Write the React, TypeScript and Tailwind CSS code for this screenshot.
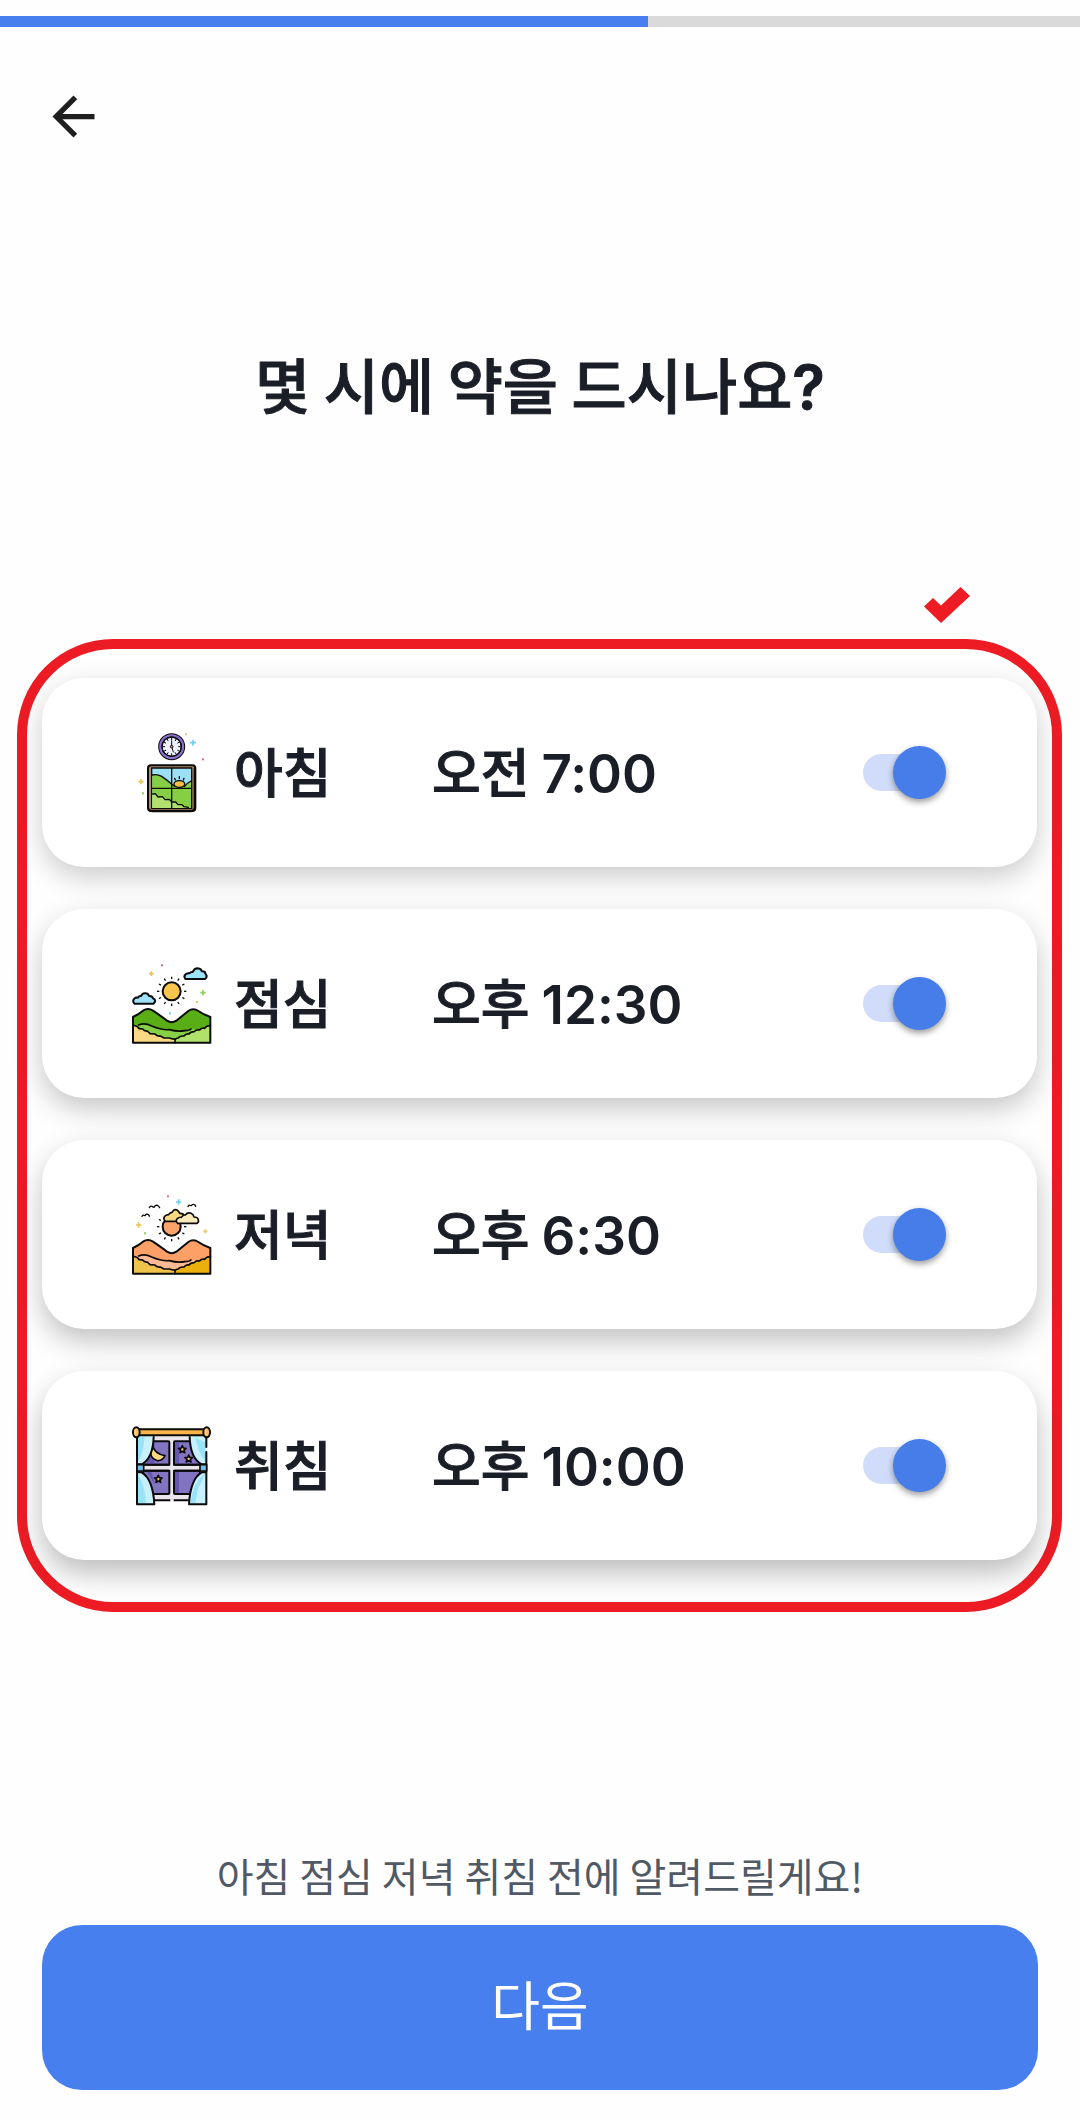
import { useState } from "react";
import type { ReactNode } from "react";

type Slot = { id: string; label: string; period: string; clock: string; icon: ReactNode; shadow: string };

const ink = { stroke: "#0b0b0b", strokeWidth: 6, strokeLinejoin: "round", strokeLinecap: "round" } as const;
const thin = { stroke: "#0b0b0b", strokeWidth: 4, strokeLinejoin: "round", strokeLinecap: "round", fill: "none" } as const;

function Sparkle({ x, y, r, color }: { x: number; y: number; r: number; color: string }) {
  return <path d={`M${x - r} ${y}h${2 * r}M${x} ${y - r}v${2 * r}`} stroke={color} strokeWidth={5} fill="none" />;
}

function Dot({ x, y, color }: { x: number; y: number; color: string }) {
  return <rect x={x - 3} y={y - 3} width={6} height={6} fill={color} />;
}

function MorningIcon() {
  return (
    <svg viewBox="36 38 240 240" className="size-20 shrink-0" aria-hidden="true">
      <circle cx="155" cy="79" r="34" fill="#eef1fd" stroke="#0b0b0b" strokeWidth="13" />
      <circle cx="155" cy="79" r="34" fill="none" stroke="#8a6fd0" strokeWidth="7" />
      <circle cx="155" cy="79" r="29" fill="none" stroke="#0b0b0b" strokeWidth="4" />
      <path
        d="M155 53v5M155 100v5M129 79h5M176 79h5M142 57l2 4M168 57l-2 4M133 66l4 2M177 66l-4 2M133 92l4-2M177 92l-4-2M142 101l2-4M168 101l-2-4"
        {...thin}
        strokeWidth={3}
      />
      <path d="M155 61v18l5 16" {...thin} strokeWidth={3} />
      <circle cx="155" cy="79" r="4" fill="#f08a8a" stroke="#0b0b0b" strokeWidth="3" />
      <rect x="84" y="135" width="142" height="137" rx="9" fill="#b08a6c" {...ink} />
      <path d="M88 268q3 5 9 5h115q12-1 12-13V145" {...ink} fill="none" strokeWidth={6} />
      <rect x="95" y="143" width="120" height="122" fill="#9ce0f6" {...ink} strokeWidth={4} />
      <path d="M97 164q14-4 28 4l32 25h56v70H97z" fill="#86cf45" />
      <path d="M213 182q-12 6-20 17h20z" fill="#86cf45" />
      <path d="M97 222l10-1 8 9 14 1 7 7 13 1 8 7 12 1 6 6 12 2 18 8H97z" fill="#b2e070" />
      <path d="M97 164q14-4 28 4 18 12 32 25l8 5M213 182q-12 6-20 17" {...thin} />
      <ellipse cx="178" cy="191" rx="16" ry="10" fill="#f6c143" stroke="#0b0b0b" strokeWidth="4" />
      <path d="M178 169v6M164 174l2 5M192 174l-2 5" {...thin} />
      <path d="M98 221l8-1 8 10 13-1 8 9 13-1 7 8 12 0 7 8 12 0 6 6 13 2" {...thin} />
      <path d="M155 143v122M95 204h120" {...thin} strokeLinecap="butt" />
      <Dot x={198} y={42} color="#e3ca72" />
      <Sparkle x={219} y={67} r={9} color="#72cdf0" />
      <Dot x={249} y={117} color="#e3697c" />
      <Sparkle x={63} y={184} r={8} color="#e8c65c" />
      <Dot x={69} y={219} color="#8ed05c" />
    </svg>
  );
}

function Rays({ cx, cy, from, angles }: { cx: number; cy: number; from: number; angles: number[] }) {
  return (
    <>
      {angles.map((a) => (
        <path key={a} d={`M${cx + from} ${cy}h7`} transform={`rotate(${a} ${cx} ${cy})`} {...thin} strokeLinecap="butt" />
      ))}
    </>
  );
}

function Hills({ back, middle, left, right }: { back: string; middle: string; left: string; right: string }) {
  return (
    <>
      <path d="M39 278V200q18-9 30-19 15-10 30 0 28 19 42 30 14 9 28 0l36-29q15-10 30 0 14 10 36 18v78z" fill={back} />
      <path d="M52 224q20-8 45 4 32 16 60 12 26 3 58-5l28 3-28 20-52 10H100z" fill={middle} />
      <path d="M39 225q14 1 18 10l11 1q5 7 14 6l8 8 15 1q4 7 16 6l11 6 16 0q8 7 18 6v9H39z" fill={left} />
      <path d="M271 226q-12 0-17 8-10-2-15 5-12-2-16 5-12 0-16 7-10-2-15 6-14-1-17 6-10 0-10 6v9h106z" fill={right} />
      <path
        d="M39 225q14 1 18 10l11 1q5 7 14 6l8 8 15 1q4 7 16 6l11 6 16 0q10 4 19 3M271 226q-12 0-17 8-10-2-15 5-12-2-16 5-12 0-16 7-10-2-15 6-14-1-17 6-10 0-10 9v5M56 224q18-8 39 3 30 13 53 11 24 7 47 3 14-1 18-5"
        {...thin}
        strokeWidth={5}
      />
      <path d="M39 277V200q18-9 30-19 15-10 30 0 28 19 42 30 14 9 28 0l36-29q15-10 30 0 14 10 36 18v77z" {...ink} fill="none" />
    </>
  );
}

function NoonIcon() {
  return (
    <svg viewBox="36 41 240 240" className="size-20 shrink-0" aria-hidden="true">
      <circle cx="155" cy="123" r="27" fill="#f8c64e" {...ink} />
      <Rays cx={155} cy={123} from={37} angles={[0, 30, 60, 90, 120, 150, 180, 210, 240, 270, 300, 330]} />
      <path d="M196 86q-6-8 1-14 5-4 11-3 4-5 10-4 5-11 15-11 10 1 13 9 10 0 10 7 6 6 3 12l-4 4z" fill="#9ce3fa" {...ink} />
      <path d="M43 160q-7-8 0-15 4-4 11-3 3-6 9-5 5-10 14-8 8 1 10 8 10-1 12 7 8 3 6 10l-4 6z" fill="#9ce3fa" {...ink} />
      <Hills back="#58ae14" middle="#86d046" left="#fbd984" right="#b0e26b" />
      <Dot x={126} y={45} color="#e3697c" />
      <Sparkle x={94} y={70} r={7} color="#f0c052" />
      <Sparkle x={249} y={127} r={8} color="#8ed05c" />
      <Dot x={231} y={155} color="#e8c65c" />
      <Dot x={150} y={189} color="#72cdf0" />
    </svg>
  );
}

function EveningIcon() {
  return (
    <svg viewBox="36 44 240 240" className="size-20 shrink-0" aria-hidden="true">
      <circle cx="155" cy="139" r="27" fill="#fca36a" {...ink} />
      <Rays cx={155} cy={139} from={37} angles={[0, 30, 60, 90, 120, 150, 180, 210]} />
      <path d="M136 123q-8-8-1-16 4-4 11-4 4-7 10-7 6-11 15-7 7 5 8 10 11-1 14 8v16z" fill="#fad982" {...ink} strokeWidth={5} />
      <path d="M173 129q-8-7-1-14 5-5 12-4 5-8 12-7 7-9 17-5 8 4 9 11 12 0 13 9 2 7-4 10z" fill="#fbe9b9" {...ink} strokeWidth={5} />
      <path d="M88 82q3-6 8-4 4 2 6 3 5-9 12-5 4 3 5 6M66 108q3-5 6-3l3 1q4-7 10-3 3 2 3 5M204 79q3-6 7-4l3 1q5-7 11-2l2 4" {...thin} />
      <g transform="translate(0 3)">
        <Hills back="#fca067" middle="#fdba94" left="#efc24b" right="#ebb00b" />
      </g>
      <Dot x={144} y={48} color="#d77a85" />
      <Sparkle x={176} y={65} r={8} color="#72cdf0" />
      <Sparkle x={56} y={134} r={8} color="#f0c052" />
      <Dot x={75} y={159} color="#8ed05c" />
      <Sparkle x={256} y={153} r={6} color="#f0c96a" />
    </svg>
  );
}

function Star({ x, y }: { x: number; y: number }) {
  return (
    <path
      d="M0-10l3 7 8 1-6 5 2 8-7-4-7 4 2-8-6-5 8-1z"
      transform={`translate(${x} ${y})`}
      fill="#f9ca6c"
      {...ink}
      strokeWidth={5}
    />
  );
}

function NightIcon() {
  return (
    <svg viewBox="36 47 240 240" className="size-20 shrink-0" aria-hidden="true">
      <path d="M64 78h182v192H64z" fill="#ebe5ec" />
      <rect x="70" y="93" width="78" height="70" rx="3" fill="#8374c2" {...ink} />
      <rect x="162" y="93" width="78" height="70" rx="3" fill="#8374c2" {...ink} />
      <rect x="70" y="181" width="78" height="70" rx="3" fill="#8374c2" {...ink} />
      <rect x="162" y="181" width="78" height="70" rx="3" fill="#8374c2" {...ink} />
      <path d="M165 96h12v64h-12zM165 184h12v64h-12zM92 96h12v64H80zM80 184h14l12 40z" fill="#6556ae" />
      <path d="M96 103q7 27 39 33-8 18-26 14-20-8-18-33 1-8 5-14z" fill="#fcd983" {...ink} strokeWidth={5} />
      <Star x={187} y={116} />
      <Star x={206} y={144} />
      <Star x={115} y={205} />
      <path d="M51 77h50q-2 66-36 83H51z" fill="#c8f0fe" />
      <path d="M259 77h-50q2 66 36 83h14z" fill="#c8f0fe" />
      <path d="M51 186h14q34 20 38 96H51z" fill="#c8f0fe" />
      <path d="M259 186h-14q-34 20-38 96h52z" fill="#c8f0fe" />
      <path d="M54 80h20q-4 50-20 74zM54 190q22 40 24 88H54zM256 96v58q-20-26-30-72zM256 190l-22 44-8 44h-14q8-66 44-88z" fill="#99e3f7" />
      <path d="M51 80v202h52q-4-76-38-96H51M259 125v157h-52q4-76 38-96h14M101 80q-2 64-36 82H51M209 80q2 64 36 82h14M259 80v30" {...ink} fill="none" />
      <path d="M75 163h73M162 163h76M75 181h73M162 181h76" {...ink} fill="none" />
      <rect x="51" y="163" width="20" height="19" fill="#6fbfe8" {...ink} strokeWidth={5} />
      <rect x="240" y="163" width="20" height="19" fill="#6fbfe8" {...ink} strokeWidth={5} />
      <path d="M104 270h47M161 270h45" {...ink} strokeLinecap="butt" />
      <rect x="56" y="57" width="198" height="18" fill="#fbb449" {...ink} />
      <ellipse cx="49" cy="66" rx="10" ry="15" fill="#fcc265" {...ink} />
      <ellipse cx="260" cy="66" rx="10" ry="15" fill="#fcc265" {...ink} />
      <path d="M45 58v15M256 58v15" stroke="#fde2a0" strokeWidth="3" />
    </svg>
  );
}

const slots: Slot[] = [
  { id: "morning", label: "아침", period: "오전", clock: "7:00", icon: <MorningIcon />, shadow: "shadow-[0_10px_28px_rgba(0,0,0,0.2)]" },
  { id: "noon", label: "점심", period: "오후", clock: "12:30", icon: <NoonIcon />, shadow: "shadow-[0_11px_28px_rgba(0,0,0,0.22)]" },
  { id: "evening", label: "저녁", period: "오후", clock: "6:30", icon: <EveningIcon />, shadow: "shadow-[0_12px_28px_rgba(0,0,0,0.24)]" },
  { id: "night", label: "취침", period: "오후", clock: "10:00", icon: <NightIcon />, shadow: "shadow-[0_13px_28px_rgba(0,0,0,0.26)]" },
];

function SlotCard({ slot }: { slot: Slot }) {
  const [on, setOn] = useState(true);
  return (
    <li className={`flex h-[189px] items-center rounded-[42px] bg-white pr-[98px] pl-[90px] text-[53px] leading-20 font-medium ${slot.shadow}`}>
      {slot.icon}
      <div className="flex flex-1 items-baseline pb-1.5">
        <label htmlFor={slot.id} className="ml-[22px] w-[198px] shrink-0 [-webkit-text-stroke:1px]">
          {slot.label}
        </label>
        <span className="flex-1 whitespace-nowrap [-webkit-text-stroke:1px]">
          {slot.period}{" "}
          <span className="font-['Inter',sans-serif] leading-none font-semibold [-webkit-text-stroke:0px]">{slot.clock}</span>
        </span>
      </div>
      <input
        id={slot.id}
        type="checkbox"
        role="switch"
        checked={on}
        onChange={(e) => setOn(e.target.checked)}
        className="relative h-[37px] w-19 shrink-0 cursor-pointer appearance-none rounded-full bg-gray-300 before:absolute before:-top-2 before:-left-2 before:size-[53px] before:rounded-full before:bg-white before:shadow-[0_3px_6px_rgba(0,0,0,0.4)] before:content-[''] checked:bg-[#d0dcfa] checked:before:left-[30px] checked:before:bg-[#467de8]"
      />
    </li>
  );
}

export default function App() {
  return (
    <main className="flex min-h-screen flex-col bg-[#fefefe] font-['Noto_Sans_CJK_KR',sans-serif] text-[#1a1e27]">
      <div role="progressbar" aria-valuenow={60} aria-valuemin={0} aria-valuemax={100} aria-label="진행률" className="mt-4 h-[11px] bg-[#dadada]">
        <div className="h-full w-3/5 bg-[#477fee]" />
      </div>
      <button type="button" aria-label="뒤로" className="mt-[58px] ml-[42px] size-[63px] self-start text-[#1f1f1f]">
        <svg viewBox="0 0 24 24" fill="currentColor" className="size-full" aria-hidden="true">
          <path d="M20 11H7.83l5.59-5.59L12 4l-8 8 8 8 1.41-1.41L7.83 13H20v-2z" />
        </svg>
      </button>
      <h1 className="mt-[195px] text-center text-[60px] leading-20 font-medium [-webkit-text-stroke:1px]">
        몇 시에 약을 드시나요<span className="font-['Inter',sans-serif] leading-none font-semibold">?</span>
      </h1>
      <div className="mt-[164px] flex justify-end pr-[110px]">
        <svg viewBox="0 0 46 36" className="h-9 w-[46px]" aria-hidden="true">
          <path d="M0 19.5L9 11l8 7.500L36.500 0 46 9 17 36z" fill="#ed1c24" />
        </svg>
      </div>
      <section className="mr-[18px] ml-[17px] mt-4 rounded-[96px] border-10 border-[#ed1c24] px-[15px] pt-[29px] pb-[42px]">
        <ul className="flex flex-col gap-[42px]">
          {slots.map((s) => (
            <SlotCard key={s.id} slot={s} />
          ))}
        </ul>
      </section>
      <footer className="mt-auto px-[42px] pb-[30px]">
        <p className="mb-5 text-center text-[40px] leading-[60px] text-[#515965]">아침 점심 저녁 취침 전에 알려드릴게요!</p>
        <button type="button" className="h-[165px] w-full rounded-[40px] bg-[#477fee] pb-2 text-[53px] text-white">
          다음
        </button>
      </footer>
    </main>
  );
}
